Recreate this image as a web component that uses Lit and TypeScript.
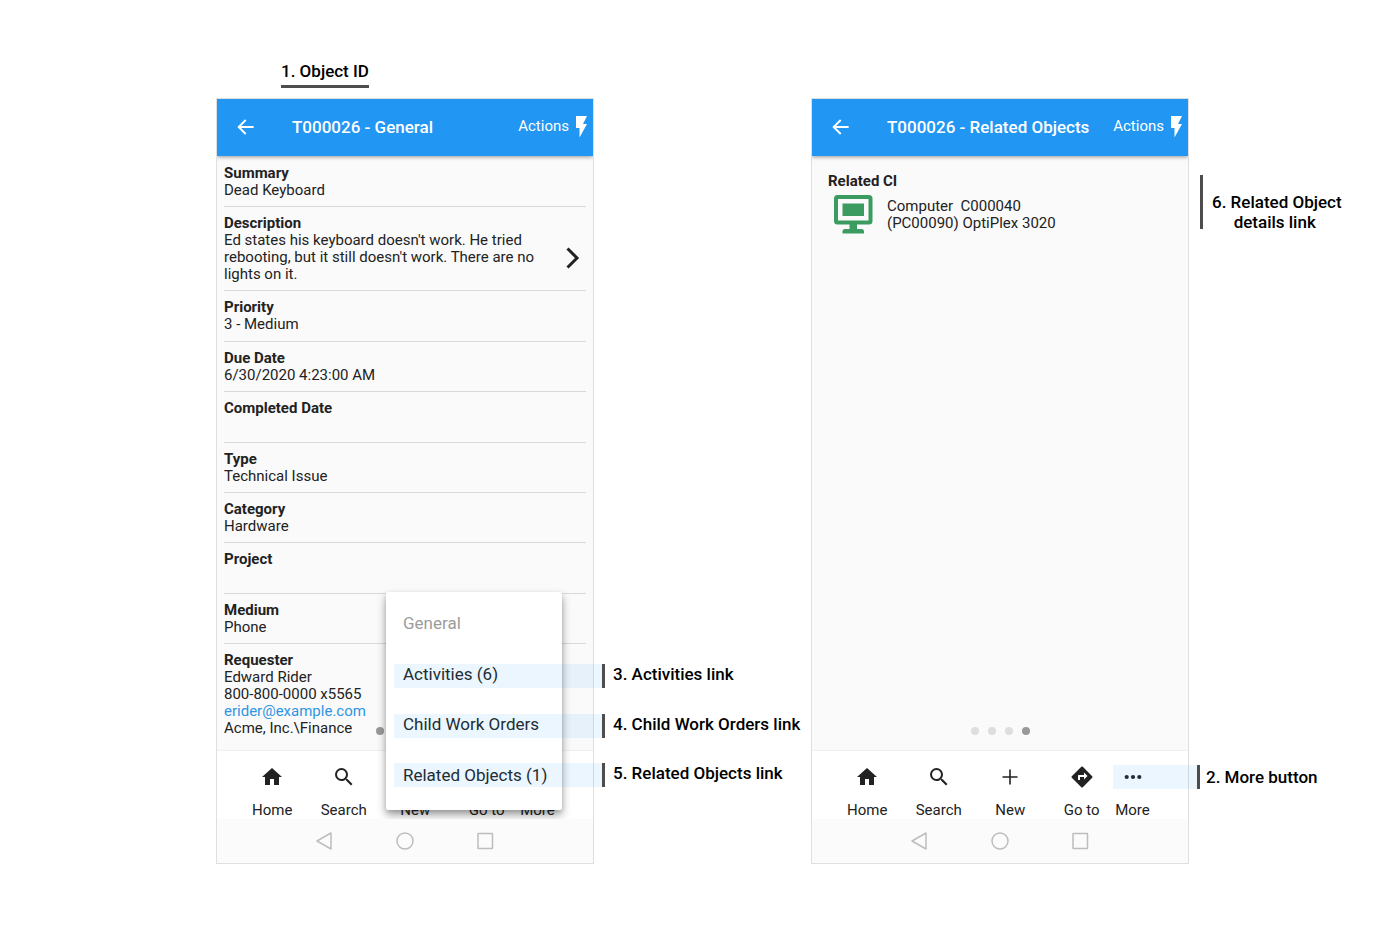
import { LitElement, html, css, svg, nothing } from "lit";
import { customElement, property } from "lit/decorators.js";
import { classMap } from "lit/directives/class-map.js";

const NAV = [
  {
    label: "Home",
    icon: svg`<path d="M10 20v-6h4v6h5v-8h3L12 3 2 12h3v8z"/>`,
  },
  {
    label: "Search",
    icon: svg`<path d="M15.5 14h-.79l-.28-.27A6.47 6.47 0 0 0 16 9.5 6.5 6.5 0 1 0 9.5 16c1.61 0 3.09-.59 4.23-1.57l.27.28v.79l5 4.99L20.49 19l-4.99-5zm-6 0C7.01 14 5 11.99 5 9.500S7.010 5 9.500 5 14 7.010 14 9.500 11.990 14 9.500 14z"/>`,
  },
  {
    label: "New",
    icon: svg`<path d="M19.500 12.800h-6.700v6.700h-1.600v-6.700H4.500v-1.600h6.700V4.500h1.600v6.700h6.700z"/>`,
  },
  {
    label: "Go to",
    icon: svg`<path d="M22.200 11.290l-9.400-9.500a1.100 1.100 0 0 0-1.500 0l-9.500 9.500a1.100 1.100 0 0 0 0 1.500l9.500 9.400c.4.4 1.100.4 1.500 0l9.400-9.400a1.100 1.100 0 0 0 0-1.500zM14 14.500V12h-4v3H8v-4c0-.550.450-1 1-1h5V7.500l3.500 3.500-3.500 3.500z"/>`,
  },
  {
    label: "More",
    icon: svg`<circle cx="5.700" cy="12" r="2.100"/><circle cx="12" cy="12" r="2.100"/><circle cx="18.300" cy="12" r="2.100"/>`,
  },
];

const FIELDS: { name: string; value: string; open?: boolean }[] = [
  { name: "Summary", value: "Dead Keyboard" },
  {
    name: "Description",
    value:
      "Ed states his keyboard doesn't work. He tried rebooting, but it still doesn't work. There are no lights on it.",
    open: true,
  },
  { name: "Priority", value: "3 - Medium" },
  { name: "Due Date", value: "6/30/2020 4:23:00 AM" },
  { name: "Completed Date", value: "" },
  { name: "Type", value: "Technical Issue" },
  { name: "Category", value: "Hardware" },
  { name: "Project", value: "" },
  { name: "Medium", value: "Phone" },
];

@customElement("phone-frame")
export class PhoneFrame extends LitElement {
  @property() heading = "";
  @property({ type: Number }) page = 0;

  static styles = css`
    :host {
      display: flex;
      flex-direction: column;
      box-sizing: border-box;
      border: 1px solid #dfdfdf;
      background: #fafafa;
      color: #222;
      font-size: 15px;
      line-height: 17px;
    }
    button {
      font: inherit;
      color: inherit;
      background: none;
      border: 0;
      padding: 0;
    }
    svg {
      display: block;
      fill: currentColor;
    }
    .screen {
      flex: 1;
      display: flex;
      flex-direction: column;
      position: relative;
      overflow: hidden;
    }
    .bar {
      display: flex;
      align-items: center;
      box-sizing: border-box;
      height: 57px;
      padding: 0 6px 2px 17px;
      background: #2196f3;
      color: #fff;
      box-shadow: 0 1px 4px rgba(0, 0, 0, 0.4);
      z-index: 1;
    }
    .title {
      flex: 1;
      margin: 0 0 0 35px;
      font-size: 17px;
      line-height: 20px;
      font-weight: 500;
      white-space: nowrap;
    }
    .actions {
      display: flex;
      align-items: center;
      gap: 6px;
    }
    .body {
      flex: 1;
      display: flex;
      flex-direction: column;
      position: relative;
    }
    .dots {
      position: absolute;
      bottom: 16px;
      left: 0;
      right: 0;
      display: flex;
      justify-content: center;
      gap: 9px;
    }
    .dot {
      width: 8px;
      height: 8px;
      border-radius: 50%;
      background: #dedede;
    }
    .dot.on {
      background: #999;
    }
    .nav {
      display: grid;
      grid-template-columns: 39fr repeat(4, minmax(0, 143fr)) minmax(0, 60fr) 81fr;
      height: 68px;
      background: #fff;
      box-shadow: 0 0 2px rgba(0, 0, 0, 0.12);
    }
    .tab {
      display: flex;
      flex-direction: column;
      align-items: center;
      gap: 13px;
      padding-top: 14px;
      white-space: nowrap;
    }
    .tab:first-child {
      grid-column-start: 2;
    }
    .system {
      display: flex;
      justify-content: center;
      align-items: center;
      gap: 62px;
      height: 44px;
      background: #fbfbfb;
      color: #bdbdbd;
    }
    .system svg {
      fill: none;
      stroke: currentColor;
      stroke-width: 1.500;
    }
  `;

  render() {
    return html`
      <div class="screen">
        <header class="bar">
          <button aria-label="Back">
            <svg width="23" height="24" viewBox="0 0 24 24">
              <path d="M20.500 11H7.330l5.590-5.590L11.500 4l-8 8 8 8 1.410-1.410L7.330 13H20.500z" />
            </svg>
          </button>
          <h1 class="title">${this.heading}</h1>
          <button class="actions">
            Actions
            <svg width="12" height="22" viewBox="0 0 12 22" aria-hidden="true">
              <path d="M1 0h11L8 8h4L4.500 21.500V12H1z" />
            </svg>
          </button>
        </header>
        <main class="body">
          <slot></slot>
          <div class="dots">
            ${[0, 1, 2, 3].map(
              (i) => html`<span class=${classMap({ dot: true, on: i === this.page })}></span>`
            )}
          </div>
        </main>
        <nav class="nav">
          ${NAV.map(
            (n) => html`<button class="tab">
              <svg width="24" height="24" viewBox="0 0 24 24" aria-hidden="true">${n.icon}</svg>
              <span>${n.label}</span>
            </button>`
          )}
        </nav>
        <slot name="menu"></slot>
      </div>
      <div class="system">
        <button aria-label="System back">
          <svg width="18" height="18" viewBox="0 0 18 18"><path d="M15 1v16L1 9z" stroke-linejoin="round" /></svg>
        </button>
        <button aria-label="System home">
          <svg width="18" height="18" viewBox="0 0 18 18"><circle cx="9" cy="9" r="8" /></svg>
        </button>
        <button aria-label="System overview">
          <svg width="18" height="18" viewBox="0 0 18 18"><rect x="2" y="1.500" width="14.500" height="15" rx="0.500" /></svg>
        </button>
      </div>
    `;
  }
}

@customElement("app-root")
export class AppRoot extends LitElement {
  static styles = css`
    :host {
      display: grid;
      box-sizing: border-box;
      grid-template-columns: 216fr 378fr 217fr 378fr 211fr;
      grid-template-rows: 98px 1fr;
      min-height: 100vh;
      padding-bottom: 76px;
      background: #fff;
      color: #000;
      font-family: Roboto, sans-serif;
      font-size: 17px;
      line-height: 20px;
      font-weight: 400;
    }
    .heading-note {
      grid-column: 2;
      grid-row: 1;
      place-self: end start;
      margin: 0 0 10px 65px;
      padding-bottom: 4px;
      border-bottom: 3px solid #4d4d4d;
      font-weight: 500;
    }
    .cell {
      grid-row: 2;
      position: relative;
      display: grid;
    }
    .first {
      grid-column: 2;
    }
    .second {
      grid-column: 4;
    }
    .fields {
      flex: 1;
      display: flex;
      flex-direction: column;
      margin: 0;
      padding: 1px 7px 0;
    }
    .field {
      flex: 1 0 auto;
      display: grid;
      grid-template-columns: 1fr auto;
      grid-template-rows: 17px auto;
      align-content: start;
      padding: 8px 0 7px;
      border-bottom: 1px solid #d8d8d8;
    }
    .field.fixed {
      flex-grow: 0;
    }
    .field.last {
      border: 0;
      padding-bottom: 14px;
    }
    dt,
    .name {
      margin: 0;
      font-size: 15px;
      line-height: 17px;
      font-weight: 700;
    }
    dd {
      margin: 0;
      min-height: 17px;
      grid-column: 1;
    }
    .open {
      grid-column: 2;
      grid-row: 2;
      align-self: center;
      margin: 0 6px 0 20px;
      padding: 0;
      border: 0;
      background: none;
      color: #222;
    }
    .open svg {
      display: block;
      fill: none;
      stroke: currentColor;
      stroke-width: 3;
    }
    .mail {
      color: #2f95e2;
      text-decoration: none;
    }
    .menu {
      position: absolute;
      right: 31px;
      bottom: 9px;
      display: flex;
      flex-direction: column;
      box-sizing: border-box;
      width: 176px;
      min-height: 218px;
      padding: 6px 0 10px;
      border-radius: 2px;
      background: #fff;
      box-shadow: 0 5px 10px rgba(0, 0, 0, 0.36), 0 2px 4px rgba(0, 0, 0, 0.12);
      z-index: 2;
    }
    .item {
      flex: 1 0 50px;
      padding: 0 17px;
      border: 0;
      background: none;
      color: #222;
      font: inherit;
      font-size: 17px;
      line-height: 20px;
      text-align: left;
      white-space: nowrap;
    }
    .item:disabled {
      color: #9c9c9c;
    }
    .related {
      padding: 17px 16px;
    }
    .ci {
      display: flex;
      align-items: center;
      gap: 14px;
      padding: 5px 6px;
      color: inherit;
      text-decoration: none;
      white-space: pre;
    }
    .note {
      position: absolute;
      display: flex;
      align-items: center;
      gap: 8px;
      font-weight: 500;
      white-space: nowrap;
      pointer-events: none;
      z-index: 3;
    }
    .mark {
      box-sizing: border-box;
      height: 24px;
      border-right: 3px solid #4d4d4d;
      background: rgba(33, 150, 243, 0.09);
    }
    .wide {
      left: calc(100% - 200px);
      align-items: flex-start;
    }
    .wide .mark {
      width: 211px;
    }
    .activities {
      bottom: 176px;
    }
    .orders {
      bottom: 126px;
    }
    .objects {
      bottom: 77px;
    }
    .more {
      left: calc(100% - 76px);
      bottom: 75px;
      gap: 6px;
    }
    .more .mark {
      width: 87px;
    }
    .details {
      left: calc(100% + 11px);
      top: 74px;
      gap: 9px;
      text-align: center;
    }
    .details .mark {
      width: 3px;
      height: 54px;
    }
    .details p {
      margin: 0;
      padding-top: 20px;
      white-space: pre;
    }
  `;

  private field(f: (typeof FIELDS)[number]) {
    return html`<div class=${classMap({ field: true, fixed: !!f.open })}>
      <dt>${f.name}</dt>
      <dd>${f.value}</dd>
      ${f.open
        ? html`<button class="open" aria-label="Open description">
            <svg width="14" height="22" viewBox="0 0 14 22"><path d="M1.500 1.500 11 11l-9.500 9.500" /></svg>
          </button>`
        : nothing}
    </div>`;
  }

  private note(kind: string, text: unknown) {
    return html`<div class="note ${kind}"><span class="mark"></span>${text}</div>`;
  }

  render() {
    return html`
      <div class="heading-note">1. Object ID</div>

      <section class="cell first">
        <phone-frame heading="T000026 - General" .page=${0}>
          <dl class="fields">
            ${FIELDS.map((f) => this.field(f))}
            <div class="field fixed last">
              <dt>Requester</dt>
              <dd>
                Edward Rider<br />800-800-0000 x5565<br />
                <a class="mail" href="mailto:erider@example.com">erider@example.com</a><br />
                Acme, Inc.\\Finance
              </dd>
            </div>
          </dl>
          <div class="menu" slot="menu">
            <button class="item" disabled>General</button>
            <button class="item">Activities (6)</button>
            <button class="item">Child Work Orders</button>
            <button class="item">Related Objects (1)</button>
          </div>
        </phone-frame>
        ${this.note("wide activities", "3. Activities link")}
        ${this.note("wide orders", "4. Child Work Orders link")}
        ${this.note("wide objects", "5. Related Objects link")}
      </section>

      <section class="cell second">
        <phone-frame heading="T000026 - Related Objects" .page=${3}>
          <div class="related">
            <h2 class="name">Related CI</h2>
            <a class="ci" href="#C000040"
              ><svg width="39" height="39" viewBox="0 0 39 39" fill="#3b9b60" aria-hidden="true">
                <path
                  fill-rule="evenodd"
                  d="M3.500 0h31.500a3.500 3.500 0 0 1 3.500 3.500v22.500a3.500 3.500 0 0 1-3.500 3.500H23v4.500h4.500a2.500 2.500 0 0 1 2.500 2.500V38.500H8.500V36.500A2.500 2.500 0 0 1 11 34h4.500v-4.500h-12A3.500 3.500 0 0 1 0 26V3.500A3.500 3.500 0 0 1 3.500 0zM4 4v21.500h30.500V4z"
                />
                <path d="M8.500 8.500H30v12.500H8.500z" /></svg
              ><span>Computer  C000040<br />(PC00090) OptiPlex 3020</span></a
            >
          </div>
        </phone-frame>
        ${this.note("details", html`<p>6. Related Object<br />details link </p>`)}
        ${this.note("more", "2. More button")}
      </section>
    `;
  }
}
